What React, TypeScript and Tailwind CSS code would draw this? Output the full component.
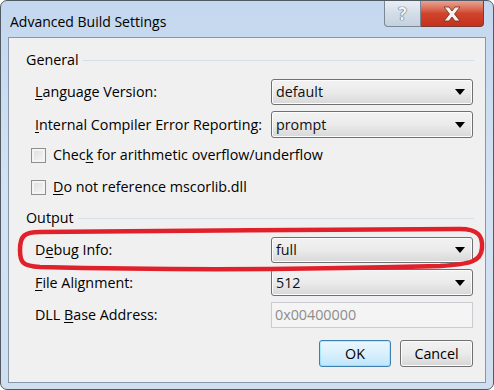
import React from "react";

const font = { fontFamily: '"Open Sans", "Noto Sans", sans-serif' };

function Acc({ text, at }: { text: string; at: number }) {
  return (
    <span>
      {text.slice(0, at)}
      <span className="underline underline-offset-[2px]">{text[at]}</span>
      {text.slice(at + 1)}
    </span>
  );
}

function Combo({ value }: { value: string }) {
  return (
    <div className="flex h-full w-[202px] items-center justify-between rounded-[3px] border border-[#707070] bg-gradient-to-b from-[#f2f2f2] via-[#ebebeb] to-[#d8d8d8] pl-[4px] pr-[7px] shadow-[inset_0_0_0_1px_#fcfcfc]">
      <span className="text-[#111]">{value}</span>
      <svg width="10" height="6" viewBox="0 0 10 6">
        <path d="M0 0 H10 L5 6 Z" fill="#000" />
      </svg>
    </div>
  );
}

function Row({ label, children, cls }: { label: React.ReactNode; children: React.ReactNode; cls: string }) {
  return (
    <div className={`flex items-center pl-[26px] pr-[12px] ${cls}`}>
      <div className="flex-1">{label}</div>
      {children}
    </div>
  );
}

function Header({ text, cls }: { text: string; cls: string }) {
  return (
    <div className={`flex h-[20px] items-center gap-[4px] pl-[17px] pr-[11px] ${cls}`}>
      <span>{text}</span>
      <div className="h-px flex-1 bg-[#d5dfe5]" />
    </div>
  );
}

function Check({ children, cls }: { children: React.ReactNode; cls: string }) {
  return (
    <div className={`flex h-[26px] items-center gap-[7px] pl-[22px] ${cls}`}>
      <div className="h-[15px] w-[15px] border border-[#8e8f8f] bg-gradient-to-br from-[#dcdcdc] to-[#f8f8f8] shadow-[inset_0_0_0_2px_#f4f4f4]" />
      {children}
    </div>
  );
}

function Btn({ children, primary }: { children: React.ReactNode; primary?: boolean }) {
  return (
    <div
      className={`flex h-[27px] items-center justify-center rounded-[3px] border ${
        primary
          ? "w-[72px] border-[#3c7fb1] bg-gradient-to-b from-[#eaf6fd] via-[#d9f0fc] to-[#bee6fd] shadow-[inset_0_0_0_1px_#48d2fe55]"
          : "w-[73px] border-[#707070] bg-gradient-to-b from-[#f2f2f2] via-[#ebebeb] to-[#d6d6d6] shadow-[inset_0_0_0_1px_#fcfcfc]"
      }`}
    >
      {children}
    </div>
  );
}

export default function App() {
  return (
    <div className="relative h-[390px] w-[494px] overflow-hidden bg-white text-[14.3px] text-black" style={font}>
      <div className="flex h-[390px] w-[494px] flex-col rounded-[7px] border border-[#525a63] bg-gradient-to-b from-[#c3d7ee] via-[#d4e3f3] to-[#cfdff0]">
        <div className="flex h-[36px] items-start">
          <div className="mt-[10px] pl-[9px] text-[14px]">Advanced Build Settings</div>
          <div className="ml-auto mr-[9px] flex">
            <div className="flex h-[26px] w-[37px] items-center justify-center rounded-bl-[4px] border border-t-0 border-[#7a8896] bg-gradient-to-b from-[#e8eef5] via-[#d3dde8] to-[#c4d1df]">
              <span className="text-[17px] font-bold leading-none text-[#f3f6f9] [text-shadow:0_0_1px_#3a4450,0_0_1px_#3a4450]">?</span>
            </div>
            <div className="flex h-[26px] w-[63px] items-center justify-center rounded-br-[4px] border border-l-0 border-t-0 border-[#7a3a36] bg-gradient-to-b from-[#e8a493] via-[#d0442c] to-[#c5301c]">
              <svg width="20" height="16" viewBox="0 0 20 16">
                <path d="M2 1 H7 L10 5 L13 1 H18 L12.5 8 L18 15 H13 L10 11 L7 15 H2 L7.5 8 Z" fill="#f7f2f0" stroke="#6d2a20" strokeWidth="0.8" />
              </svg>
            </div>
          </div>
        </div>
        <div className="mx-[7px] flex h-[346px] flex-col border border-[#8796a8] bg-[#f0f0f0]">
          <Header text="General" cls="mt-[12px]" />
          <Row label={<Acc text="Language Version:" at={0} />} cls="mt-[9px] h-[26px]">
            <Combo value="default" />
          </Row>
          <Row label={<Acc text="Internal Compiler Error Reporting:" at={0} />} cls="mt-[6px] h-[27px]">
            <Combo value="prompt" />
          </Row>
          <Check cls="mt-[4px]">
            <Acc text="Check for arithmetic overflow/underflow" at={4} />
          </Check>
          <Check cls="mt-[6px]">
            <Acc text="Do not reference mscorlib.dll" at={0} />
          </Check>
          <Header text="Output" cls="mt-[8px]" />
          <Row label={<Acc text="Debug Info:" at={1} />} cls="mt-[9px] h-[26px]">
            <Combo value="full" />
          </Row>
          <Row label={<Acc text="File Alignment:" at={0} />} cls="mt-[6px] h-[27px]">
            <Combo value="512" />
          </Row>
          <Row label={<Acc text="DLL Base Address:" at={4} />} cls="mt-[6px] h-[26px]">
            <div className="flex h-full w-[202px] items-center border border-[#c9cdd2] bg-[#f4f4f4] pl-[3px] text-[#8d8d8d]">
              0x00400000
            </div>
          </Row>
          <div className="mt-[12px] flex justify-end gap-[9px] pr-[12px]">
            <Btn primary>OK</Btn>
            <Btn>Cancel</Btn>
          </div>
        </div>
      </div>
      <svg className="pointer-events-none absolute left-0 top-0" width="494" height="390">
        <path
          d="M40 232 C150 231 350 229 460 229 C478 229 483 236 482 248 C481 262 470 264 440 266 C330 269 200 271 40 267 C22 266 20 262 20 250 C20 236 24 232 40 232 Z"
          fill="none"
          stroke="#e0212b"
          strokeWidth="4.5"
        />
      </svg>
    </div>
  );
}
